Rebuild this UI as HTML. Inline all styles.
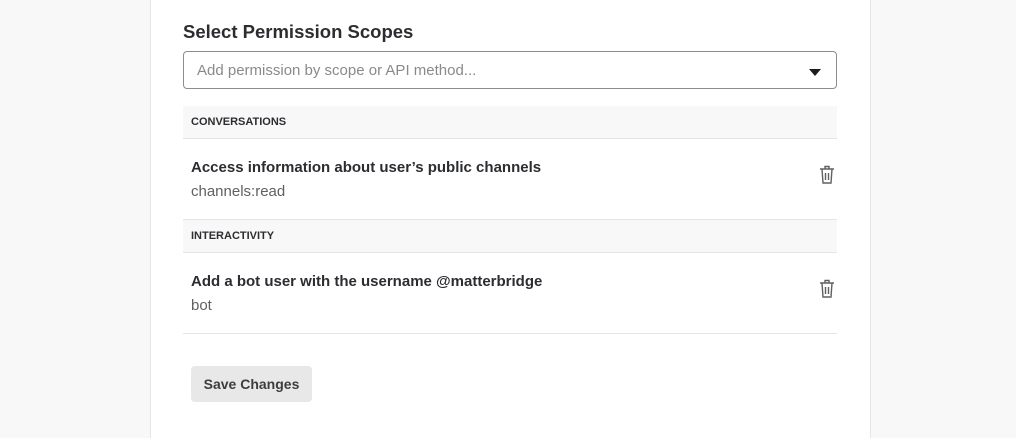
<html><head><style>
body{margin:0;width:1016px;height:428px;background:#f8f8f8;font-family:"Liberation Sans",sans-serif;overflow:hidden;position:relative}
.card{position:absolute;left:150px;top:-2px;width:719px;height:440px;background:#fff;border-left:1px solid #e6e6e6;border-right:1px solid #e6e6e6}
.a{position:absolute}
h1{position:absolute;left:183px;top:21px;margin:0;font-size:18.5px;font-weight:bold;color:#2c2d30}
.inp{left:183px;top:51px;width:652px;height:36px;border:1px solid #8d8d8d;border-radius:4px;background:#fff}
.inp span{position:absolute;left:13px;top:10px;font-size:15px;color:#8a8a8a}
.hd{left:183px;width:654px;height:32px;background:#f8f8f8;border-bottom:1px solid #e5e5e5;font-size:11px;font-weight:bold;color:#2c2d30;line-height:33px}
.hd span{margin-left:8px}
.t{left:191px;font-size:15px;font-weight:bold;color:#2c2d30}
.s{left:191px;font-size:15px;color:#616061}
.ln{left:183px;width:654px;height:1px;background:#e5e5e5}
.btn{left:191px;top:366px;width:121px;height:36px;background:#e8e8e8;border-radius:4px;font-size:14px;font-weight:bold;color:#3d3d3d;text-align:center;line-height:36px}
</style></head><body>
<div class="card"></div>
<h1>Select Permission Scopes</h1>
<div class="a inp"><span>Add permission by scope or API method...</span>
<svg class="a" style="left:625px;top:17px" width="12" height="8"><path d="M0 0H12L6 7Z" fill="#1d1c1d"/></svg></div>
<div class="a hd" style="top:106px"><span>CONVERSATIONS</span></div>
<div class="a t" style="top:159px">Access information about user’s public channels</div>
<div class="a s" style="top:183px">channels:read</div>
<div class="a ln" style="top:219px"></div>
<div class="a hd" style="top:220px"><span>INTERACTIVITY</span></div>
<div class="a t" style="top:273px">Add a bot user with the username @matterbridge</div>
<div class="a s" style="top:297px">bot</div>
<div class="a ln" style="top:333px"></div>
<svg class="a" style="left:819px;top:165px" width="16" height="20"><g fill="none" stroke="#616061" stroke-width="1.4"><path d="M1 4H15M6 4V1.5H10V4M3 4L4 18H12L13 4M6.5 8V15M9.5 8V15"/></g></svg>
<svg class="a" style="left:819px;top:279px" width="16" height="20"><g fill="none" stroke="#616061" stroke-width="1.4"><path d="M1 4H15M6 4V1.5H10V4M3 4L4 18H12L13 4M6.5 8V15M9.5 8V15"/></g></svg>
<div class="a btn">Save Changes</div>
</body></html>
